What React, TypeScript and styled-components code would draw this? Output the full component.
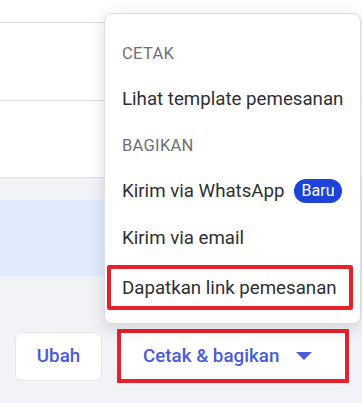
import styled, { createGlobalStyle } from 'styled-components';

const GlobalStyle = createGlobalStyle`
  html, body {
    margin: 0;
    padding: 0;
    background: #f2f3f7;
    font-family: Roboto, "Liberation Sans", sans-serif;
  }
`;

const Page = styled.div`
  position: relative;
  width: 362px;
  height: 403px;
  overflow: hidden;
  background: #f2f3f7;
  display: flex;
  flex-direction: column;
`;

const ListCard = styled.div`
  background: #ffffff;
  border-bottom: 1px solid #dedfe3;
  display: flex;
  flex-direction: column;
`;

const ListRow = styled.div<{ $height: number; $gapBelow?: number }>`
  height: ${(p) => p.$height}px;
  border-bottom: 1px solid #dcdcdc;
  margin-bottom: ${(p) => p.$gapBelow ?? 0}px;
  &:last-child {
    border-bottom: none;
  }
`;

const Spacer = styled.div`
  height: 22px;
`;

const InfoBanner = styled.div`
  height: 76px;
  background: #e0ecfd;
`;

const Actions = styled.div`
  display: flex;
  align-items: center;
  gap: 15px;
  padding: 53px 0 0 15px;
`;

const Button = styled.button`
  box-sizing: border-box;
  height: 49px;
  background: #ffffff;
  border: 1px solid #e6e8ee;
  border-radius: 7px;
  color: #4a5cd6;
  font-family: Roboto, "Liberation Sans", sans-serif;
  font-size: 18.8px;
  font-weight: 500;
  display: flex;
  align-items: center;
  cursor: pointer;
`;

const EditButton = styled(Button)`
  width: 87px;
  justify-content: center;
  padding: 0;
`;

const ShareButton = styled(Button)`
  width: 232px;
  height: 54px;
  border: 4px solid #e8202a;
  border-radius: 1px;
  padding: 0 33px 0 22px;
  justify-content: space-between;
`;

const Caret = styled.span`
  width: 0;
  height: 0;
  border-left: 8px solid transparent;
  border-right: 8px solid transparent;
  border-top: 8px solid #4a5cd6;
`;

const Menu = styled.div`
  position: absolute;
  left: 104px;
  top: 13px;
  width: 257px;
  box-sizing: border-box;
  background: #ffffff;
  border: 1px solid #dcdde3;
  border-radius: 8px;
  box-shadow: 0 4px 16px rgba(40, 44, 60, 0.17);
  padding: 16px 0 13px;
  display: flex;
  flex-direction: column;
`;

const SectionLabel = styled.div`
  height: 46px;
  display: flex;
  align-items: center;
  padding-left: 17px;
  font-size: 16.5px;
  letter-spacing: 0.3px;
  color: #6b6f78;
  text-transform: uppercase;
`;

const MenuItem = styled.div<{ $highlighted?: boolean; $height?: number }>`
  box-sizing: border-box;
  height: ${(p) => p.$height ?? 46}px;
  display: flex;
  align-items: center;
  gap: 9px;
  padding-left: 17px;
  font-size: 18.7px;
  color: #2e3034;
  ${(p) =>
    p.$highlighted &&
    `
    width: 246px;
    margin: 3px 0 0 2px;
    padding-left: 11px;
    border: 4px solid #e8202a;
    border-radius: 2px;
  `}
`;

const Badge = styled.span`
  background: #1d43d8;
  color: #ffffff;
  font-size: 16px;
  line-height: 24px;
  padding: 0 8px;
  border-radius: 12px;
`;

export default function App() {
  return (
    <Page>
      <GlobalStyle />
      <ListCard>
        <ListRow $height={22} />
        <ListRow $height={77} $gapBelow={6} />
        <ListRow $height={70} />
      </ListCard>
      <Spacer />
      <InfoBanner />
      <Actions>
        <EditButton>Ubah</EditButton>
        <ShareButton>
          Cetak &amp; bagikan
          <Caret />
        </ShareButton>
      </Actions>
      <Menu>
        <SectionLabel>Cetak</SectionLabel>
        <MenuItem>Lihat template pemesanan</MenuItem>
        <SectionLabel>Bagikan</SectionLabel>
        <MenuItem>
          Kirim via WhatsApp <Badge>Baru</Badge>
        </MenuItem>
        <MenuItem $height={48}>Kirim via email</MenuItem>
        <MenuItem $highlighted $height={45}>
          Dapatkan link pemesanan
        </MenuItem>
      </Menu>
    </Page>
  );
}
